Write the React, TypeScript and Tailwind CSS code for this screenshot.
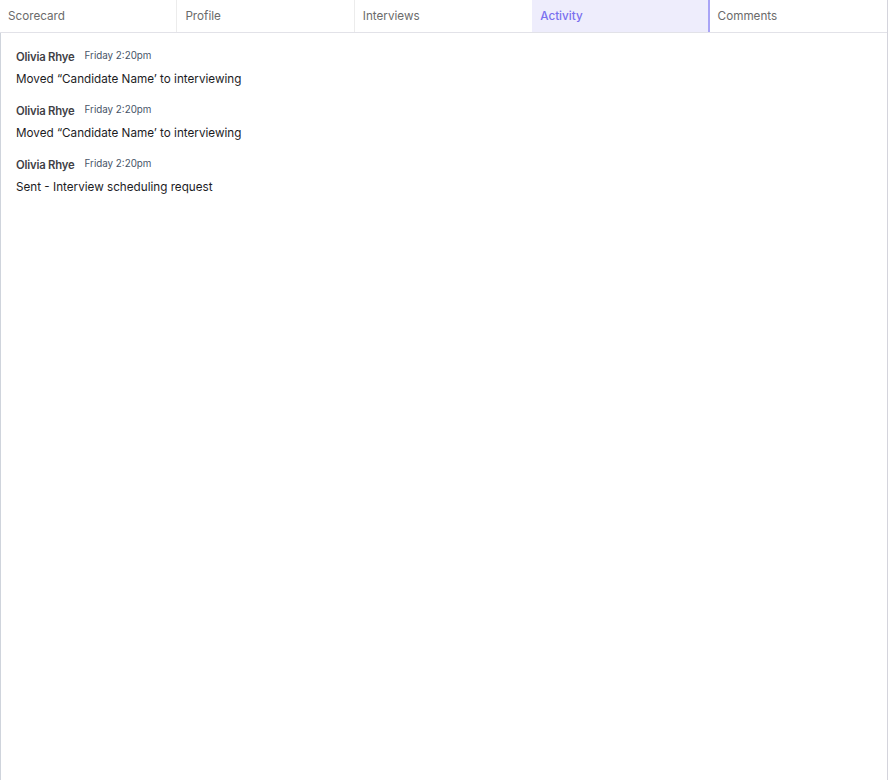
const tabs = ["Scorecard", "Profile", "Interviews", "Activity", "Comments"];

const activity = [
    { name: "Olivia Rhye", time: "Friday 2:20pm", text: "Moved “Candidate Name’ to interviewing" },
    { name: "Olivia Rhye", time: "Friday 2:20pm", text: "Moved “Candidate Name’ to interviewing" },
    { name: "Olivia Rhye", time: "Friday 2:20pm", text: "Sent - Interview scheduling request" },
];

export default function App() {
    return (
        <div
            className="w-[888px] h-[780px] flex flex-col bg-white border-r border-[#d4d4dc]"
            style={{ fontFamily: "Inter, 'Noto Sans', sans-serif" }}
        >
            {/* Tabs */}
            <div className="grid grid-cols-5 h-[33px] border-b border-[#e2e2e8] shrink-0">
                {tabs.map((tab, idx) => {
                    const active = tab === "Activity";
                    return (
                        <div
                            key={tab}
                            className={
                                active
                                    ? "flex items-center pl-2 pt-[2px] bg-[#eeedfc] text-[#7a70ef] text-[11.7px] font-medium border-r-2 border-[#a9a4f6]"
                                    : idx === 4 || idx === 2
                                    ? "flex items-center pl-2 pt-[2px] text-[#6b6b6b] text-[11.7px]"
                                    : "flex items-center pl-2 pt-[2px] text-[#6b6b6b] text-[11.7px] border-r border-[#ececec]"
                            }
                        >
                            {tab}
                        </div>
                    );
                })}
            </div>

            {/* Activity feed */}
            <div className="flex-1 border-l border-[#cfd4dc] px-[15px] pt-[16px] flex flex-col gap-[16px]">
                {activity.map((item, idx) => (
                    <div key={idx} className="flex flex-col gap-[6px]">
                        <div className="flex items-center gap-[10px] h-[16px]">
                            <span className="text-[11.3px] font-semibold text-[#3f3f46] tracking-[-0.2px] leading-[16px]">{item.name}</span>
                            <span className="text-[9.8px] text-[#475467] leading-[16px] -mt-[3px]">{item.time}</span>
                        </div>
                        <p className="text-[11.7px] text-[#1d1d1f] leading-[16px] h-[16px]">{item.text}</p>
                    </div>
                ))}
            </div>
        </div>
    );
}
